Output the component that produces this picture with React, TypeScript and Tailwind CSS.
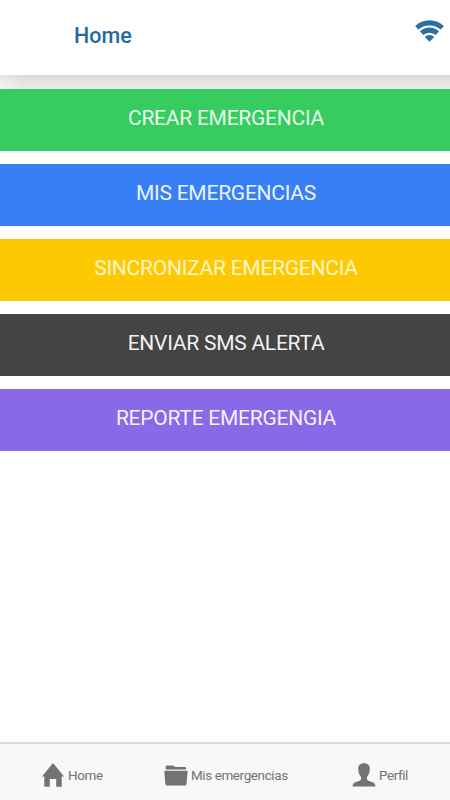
import React from 'react'

const actions = [
  { label: 'CREAR EMERGENCIA', style: 'bg-[#36cc60] text-[#e6fbe9]' },
  { label: 'MIS EMERGENCIAS', style: 'bg-[#387ff5] text-[#e9f3ff]' },
  { label: 'SINCRONIZAR EMERGENCIA', style: 'bg-[#fec803] text-[#fff6c9]' },
  { label: 'ENVIAR SMS ALERTA', style: 'bg-[#444444] text-[#f2f2f2]' },
  { label: 'REPORTE EMERGENGIA', style: 'bg-[#8969e8] text-[#f6effe]' },
]

const WifiIcon = () => (
  <svg viewBox="0 0 29 22" className="w-[29px] h-[22px] fill-[#2b6ea3]">
    <path d="M14.5 0.3C9 0.3 4 2.4 0.2 5.9L3.2 9.6C6.3 6.9 10.2 5.4 14.5 5.4S22.7 6.9 25.8 9.6L28.8 5.9C25 2.4 20 0.3 14.5 0.3Z" />
    <path d="M14.5 7.5C10.9 7.5 7.6 8.8 5 11.3L8.2 15.1C9.9 13.6 12.1 12.7 14.5 12.7S19.1 13.6 20.8 15.1L24 11.3C21.4 8.8 18.1 7.5 14.5 7.5Z" />
    <path d="M14.5 14.9C12.6 14.9 11 15.6 9.7 17L14.5 21.8L19.3 17C18 15.6 16.4 14.9 14.5 14.9Z" />
  </svg>
)

const HomeIcon = () => (
  <svg viewBox="0 0 22 24" className="w-[22px] h-6 fill-[#737373]">
    <path d="M11 0L0 13.4H2.3V23.8H7.8V16H14.2V23.8H19.7V13.4H22Z" />
  </svg>
)

const FolderIcon = () => (
  <svg viewBox="0 0 24 21" className="w-6 h-[21px] fill-[#737373]">
    <path d="M1.8 4.6V1.5Q1.8 0.4 2.9 0.4H8.6Q9.4 0.4 9.9 1L10.4 1.6Q10.8 2.1 11.6 2.1H20.8Q22.2 2.1 22.2 3.4V4.6Z" />
    <path d="M1 5.8H22.8Q23.7 5.8 23.6 6.8L22.5 19.1Q22.4 20.4 21.1 20.4H2.8Q1.5 20.4 1.4 19.1L0.3 6.8Q0.2 5.8 1 5.8Z" />
  </svg>
)

const PersonIcon = () => (
  <svg viewBox="0 0 24 24" className="w-6 h-6 fill-[#737373]">
    <path d="M12 0.2C8 0.2 6 2.6 6.2 6C6.3 9.6 7.5 12 8.7 13.5C9.2 14.2 9.3 16 8.8 16.8C8 18.2 5.4 18.2 2.8 19.5C1.2 20.3 0.7 21.8 0.5 23.6H23.5C23.3 21.8 22.8 20.3 21.2 19.5C18.6 18.2 16 18.2 15.2 16.8C14.7 16 14.8 14.2 15.3 13.5C16.5 12 17.7 9.6 17.8 6C18 2.6 16 0.2 12 0.2Z" />
  </svg>
)

const tabs = [
  { label: 'Home', icon: <HomeIcon />, gap: 'gap-1' },
  { label: 'Mis emergencias', icon: <FolderIcon />, gap: 'gap-[3px] -ml-[3px]' },
  { label: 'Perfil', icon: <PersonIcon />, gap: 'gap-[3px]' },
]

export default function App() {
  return (
    <div className="flex h-[800px] w-full flex-col bg-white font-[Roboto,sans-serif]">
      {/* Header */}
      <header className="flex h-[75px] shrink-0 items-start justify-between pl-[74px] pr-1.5">
        <h1 className="mt-[22px] text-[21.5px] leading-[27px] font-medium text-[#2469a0]">Home</h1>
        <div className="mt-5">
          <WifiIcon />
        </div>
      </header>
      <div className="h-3.5 shrink-0 bg-linear-to-b from-[#d9d9d9] via-[#e2e2e2] via-40% to-[#ebebeb]">
        <div className="h-full bg-linear-to-r from-white/40 via-transparent via-5% to-transparent" />
      </div>

      {/* Actions */}
      <main className="flex flex-1 flex-col gap-[13px]">
        {actions.map((a) => (
          <button
            key={a.label}
            className={`flex h-[62px] w-full shrink-0 justify-center pt-[15px] pl-0.5 text-[21px] leading-7 tracking-[-0.25px] ${a.style}`}
          >
            {a.label}
          </button>
        ))}
      </main>

      {/* Tabs */}
      <nav className="flex h-[58px] shrink-0 items-start justify-between border-t-2 border-[#dadada] bg-[#f8f8f8] pt-[19px] pr-[42px] pl-[42px] text-[#737373]">
        {tabs.map((t) => (
          <div key={t.label} className={`flex h-6 items-center ${t.gap}`}>
            {t.icon}
            <span className="text-[13.5px] leading-6 tracking-[-0.4px] whitespace-nowrap">{t.label}</span>
          </div>
        ))}
      </nav>
    </div>
  )
}
